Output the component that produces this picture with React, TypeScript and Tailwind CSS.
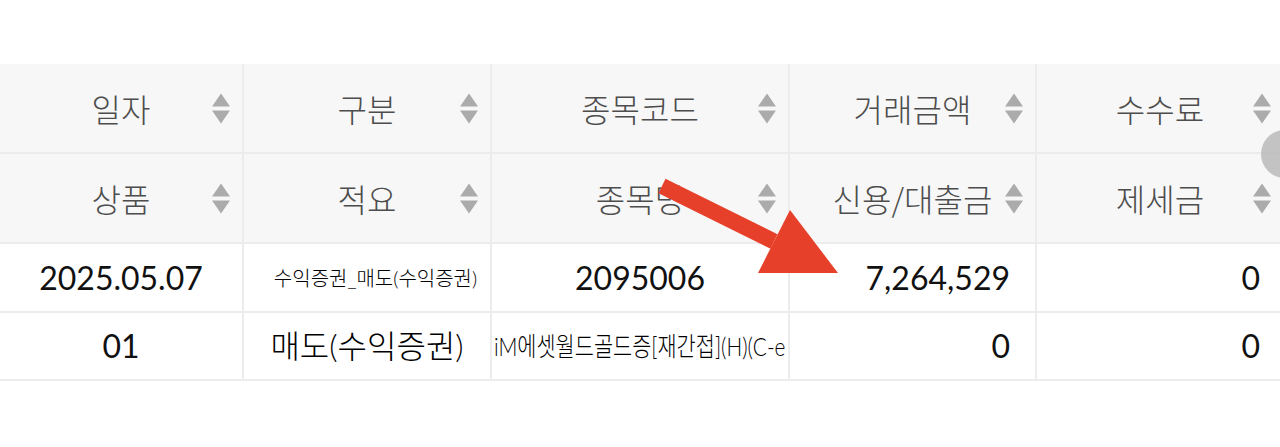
import * as React from "react"

const headTop = ["일자", "구분", "종목코드", "거래금액", "수수료"]
const headBottom = ["상품", "적요", "종목명", "신용/대출금", "제세금"]

function SortIcon() {
  return (
    <svg width="18" height="31" viewBox="0 0 18 31" className="absolute right-[12px] top-1/2 -translate-y-1/2 mt-[1px]">
      <polygon points="9,0 18,13 0,13" fill="#ababab" />
      <polygon points="0,17 18,17 9,30" fill="#ababab" />
    </svg>
  )
}

function HeadCell({ label }: { label: string }) {
  return (
    <div className="relative flex h-[88px] items-center justify-center bg-[#f7f7f7] text-[32px] font-light text-[#4d4d4d]">
      <span>{label}</span>
      <SortIcon />
    </div>
  )
}

export default function App() {
  return (
    <div className="relative h-[447px] w-full overflow-hidden bg-white font-['Lato','Noto_Sans_CJK_KR',sans-serif] leading-none">
      <div className="pt-[64px]">
        <div className="grid w-[1283px] grid-cols-[242px_246px_296px_245px_246px] gap-[2px] border-b-2 border-[#ececec] bg-[#ececec] font-['Noto_Sans_CJK_KR',sans-serif]">
          {headTop.map((h) => (
            <HeadCell key={h} label={h} />
          ))}
          {headBottom.map((h) => (
            <HeadCell key={h} label={h} />
          ))}
        </div>

        <div className="-mt-[2px] grid w-[1283px] grid-cols-[242px_246px_296px_245px_246px] gap-[2px] border-y-2 border-[#ececec] bg-[#ececec] text-[#111111] font-['Lato','Noto_Sans_CJK_KR',sans-serif]">
          {/* 1행 */}
          <div className="flex h-[67px] items-center justify-center bg-white text-[32px]">2025.05.07</div>
          <div className="flex h-[67px] items-center justify-center bg-white pl-[17px] text-[20px] font-light text-black">수익증권_매도(수익증권)</div>
          <div className="flex h-[67px] items-center justify-center bg-white text-[32px]">2095006</div>
          <div className="flex h-[67px] items-center justify-end bg-white pr-[25px] text-[32px]">7,264,529</div>
          <div className="flex h-[67px] items-center justify-end bg-white pr-[23px] text-[32px]">0</div>

          {/* 2행 */}
          <div className="flex h-[66px] items-center justify-center bg-white text-[32px]">01</div>
          <div className="flex h-[66px] items-center justify-center bg-white text-[32px] font-light text-black">매도(수익증권)</div>
          <div className="flex h-[66px] items-center bg-white pl-[2px]">
            <div className="origin-left scale-x-[0.8] whitespace-nowrap text-[26px] font-light text-black">iM에셋월드골드증[재간접](H)(C-e</div>
          </div>
          <div className="flex h-[66px] items-center justify-end bg-white pr-[25px] text-[32px]">0</div>
          <div className="flex h-[66px] items-center justify-end bg-white pr-[23px] text-[32px]">0</div>
        </div>
      </div>

      {/* 스크롤 핸들 */}
      <div className="absolute left-[1261px] top-[130px] h-[48px] w-[48px] rounded-full bg-[#bdbdbd]/90" />

      {/* 빨간 화살표 */}
      <svg className="pointer-events-none absolute left-0 top-0" width="1280" height="447" viewBox="0 0 1280 447">
        <polygon points="665.5,178.8 777.5,234.3 770.5,248.7 658.5,193.2" fill="#e6402a" />
        <polygon points="790,210 838,273 758,273" fill="#e6402a" />
      </svg>
    </div>
  )
}
